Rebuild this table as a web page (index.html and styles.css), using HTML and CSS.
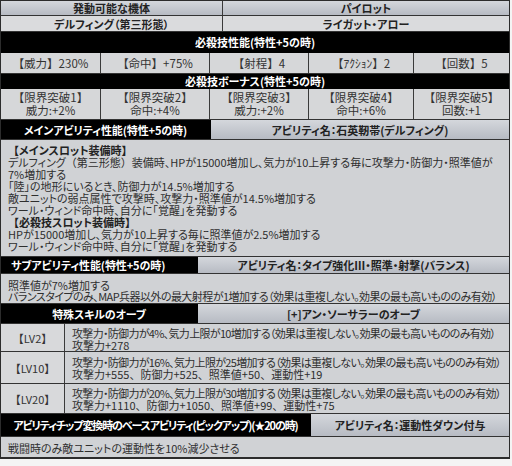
FILE: index.html
```html
<!DOCTYPE html>
<html lang="ja">
<head>
<meta charset="utf-8">
<link rel="stylesheet" href="styles.css">
</head>
<body>
<div class="sheet">
  <div class="row r-top">
    <div class="cell head w222">発動可能な機体</div>
    <div class="cell head grow">パイロット</div>
  </div>
  <div class="row r-16">
    <div class="cell data bold w222">デルフィング（第三形態）</div>
    <div class="cell data bold grow">ライガット・アロー</div>
  </div>
  <div class="row bar h21">必殺技性能(特性+5の時)</div>
  <div class="row five h21">
    <div class="cell val">【威力】230%</div>
    <div class="cell val">【命中】+75%</div>
    <div class="cell val">【射程】4</div>
    <div class="cell val">【ｱｸｼｮﾝ】2</div>
    <div class="cell val">【回数】5</div>
  </div>
  <div class="row bar h15">必殺技ボーナス(特性+5の時)</div>
  <div class="row five h31">
    <div class="cell val two">【限界突破1】<br>威力:+2%</div>
    <div class="cell val two">【限界突破2】<br>命中:+4%</div>
    <div class="cell val two">【限界突破3】<br>威力:+2%</div>
    <div class="cell val two">【限界突破4】<br>命中:+6%</div>
    <div class="cell val two">【限界突破5】<br>回数:+1</div>
  </div>
  <div class="row h20">
    <div class="cell black w210">メインアビリティ性能(特性+5の時)</div>
    <div class="cell head grow">アビリティ名：石英靭帯(デルフィング)</div>
  </div>
  <div class="row text main-text">
    <p><b><span class="fw">【</span>メインスロット装備時<span class="fw">】</span></b></p>
    <p>デルフィング<span class="fw">（</span>第三形態<span class="fw">）</span>装備時、HPが15000増加し、気力が10上昇する毎に攻撃力・防御力・照準値が</p>
    <p>7%増加する</p>
    <p>「陸」の地形にいるとき、防御力が14.5%増加する</p>
    <p>敵ユニットの弱点属性で攻撃時、攻撃力・照準値が14.5%増加する</p>
    <p>ワール・ウィンド命中時、自分に「覚醒」を発動する</p>
    <p><b><span class="fw">【</span>必殺技スロット装備時<span class="fw">】</span></b></p>
    <p>HPが15000増加し、気力が10上昇する毎に照準値が2.5%増加する</p>
    <p>ワール・ウィンド命中時、自分に「覚醒」を発動する</p>
  </div>
  <div class="row h17">
    <div class="cell black left w197">サブアビリティ性能(特性+5の時)</div>
    <div class="cell head grow">アビリティ名：タイプ強化Ⅲ・照準・射撃(バランス)</div>
  </div>
  <div class="row text sub-text">
    <p>照準値が7%増加する</p>
    <p class="tight">バランスタイプのみ、MAP兵器以外の最大射程が1増加する（効果は重複しない。効果の最も高いもののみ有効）</p>
  </div>
  <div class="row h20">
    <div class="cell black w197">特殊スキルのオーブ</div>
    <div class="cell head grow">[+]アン・ソーサラーのオーブ</div>
  </div>
  <div class="row lv h28">
    <div class="cell lvl">【LV2】</div>
    <div class="cell lvtext">
      <p class="tighter">攻撃力・防御力が4%、気力上限が10増加する（効果は重複しない。効果の最も高いもののみ有効）</p>
      <p class="plain">攻撃力+278</p>
    </div>
  </div>
  <div class="row lv h32">
    <div class="cell lvl">【LV10】</div>
    <div class="cell lvtext">
      <p class="tighter">攻撃力・防御力が16%、気力上限が25増加する（効果は重複しない。効果の最も高いもののみ有効）</p>
      <p class="plain">攻撃力+555、防御力+525、照準値+50、運動性+19</p>
    </div>
  </div>
  <div class="row lv h30">
    <div class="cell lvl">【LV20】</div>
    <div class="cell lvtext">
      <p class="tighter">攻撃力・防御力が20%、気力上限が30増加する（効果は重複しない。効果の最も高いもののみ有効）</p>
      <p class="plain">攻撃力+1110、防御力+1050、照準値+99、運動性+75</p>
    </div>
  </div>
  <div class="row h23">
    <div class="cell black chip w310">アビリティチップ変換時のベースアビリティ(ピックアップ)(★20の時)</div>
    <div class="cell head grow">アビリティ名：運動性ダウン付与</div>
  </div>
  <div class="row text last-text">
    <p>戦闘時のみ敵ユニットの運動性を10%減少させる</p>
  </div>
</div>
</body>
</html>
```

FILE: styles.css
```css
* { box-sizing: border-box; }
html, body { margin: 0; padding: 0; }
body {
  background: #f4f4f4;
  width: 512px;
  height: 466px;
  font-family: "Noto Sans CJK JP", "Noto Sans", sans-serif;
  color: #2a2a2a;
  font-size: 11px;
  font-feature-settings: "palt";
}
p { margin: 0; white-space: nowrap; height: 12px; line-height: 12px; }

.sheet {
  width: 510px;
  border-left: 1px solid #2c2c2c;
  border-right: 1px solid #2c2c2c;
  border-top: 1px solid #2c2c2c;
  border-bottom: 2px solid #2c2c2c;
  background: #d2d4d7;
}

.row {
  display: flex;
  border-bottom: 1px solid #333;
}
.r-top { height: 15px; }
.r-16 { height: 16px; }
.h15 { height: 15px; }
.h17 { height: 17px; }
.h20 { height: 20px; }
.h21 { height: 21px; }
.h23 { height: 23px; }
.h28 { height: 28px; }
.h30 { height: 30px; }
.h31 { height: 31px; }
.h32 { height: 32px; }

.cell {
  display: flex;
  align-items: center;
  justify-content: center;
  border-right: 1px solid #3a3a3a;
  white-space: nowrap;
  line-height: 12px;
}
.cell:last-child { border-right: none; }
.grow { flex: 1; }
.w222 { width: 222px; }
.w210 { width: 210px; }
.w197 { width: 197px; }
.w310 { width: 310px; }

.head {
  background: linear-gradient(#d4d7dc, #b7bbc3);
  font-weight: bold;
  color: #222;
  font-size: 11px;
}
.data {
  background: #dadbdd;
}
.bold { font-weight: bold; color: #222; }

.bar {
  background: #000;
  color: #fff;
  font-weight: bold;
  font-size: 11px;
  justify-content: center;
  align-items: center;
  border-bottom-color: #000;
}
.black {
  background: #000;
  color: #fff;
  font-weight: bold;
  font-size: 11px;
  letter-spacing: -0.1px;
  border-right-color: #000;
}
.black.left { justify-content: flex-start; padding-left: 10px; }
.black.chip { letter-spacing: -1.1px; }

.five {
  display: grid;
  grid-template-columns: 100px 109px 99px 105px 1fr;
}
.val {
  background: #d6d7d9;
  font-size: 11.5px;
  font-feature-settings: normal;
  color: #333;
}
.val.two { text-align: center; line-height: 13px; }

.text {
  display: block;
  background: #d0d2d5;
  padding-left: 7px;
  line-height: 12px;
  color: #2e2e2e;
}
.main-text { height: 117px; padding-top: 4px; }
.sub-text { height: 30px; padding-top: 5px; }
.sub-text p { height: 10.5px; }
.last-text { height: 20px; padding-top: 5px; border-bottom: none; }
.fw { font-feature-settings: normal; }
.tight { letter-spacing: -0.55px; }
.tighter { letter-spacing: -0.68px; }
.plain { font-feature-settings: normal; }
b { color: #222; }

.lvl {
  width: 64px;
  background: #d8d9db;
  font-feature-settings: normal;
  font-size: 11px;
  color: #333;
}
.lvtext {
  flex: 1;
  display: block;
  padding-left: 7px;
  padding-top: 3px;
  background: #d0d2d5;
  line-height: 12px;
  color: #2e2e2e;
}
.h32 .lvtext { padding-top: 4px; }
.h30 .lvtext { padding-top: 3px; }
```
